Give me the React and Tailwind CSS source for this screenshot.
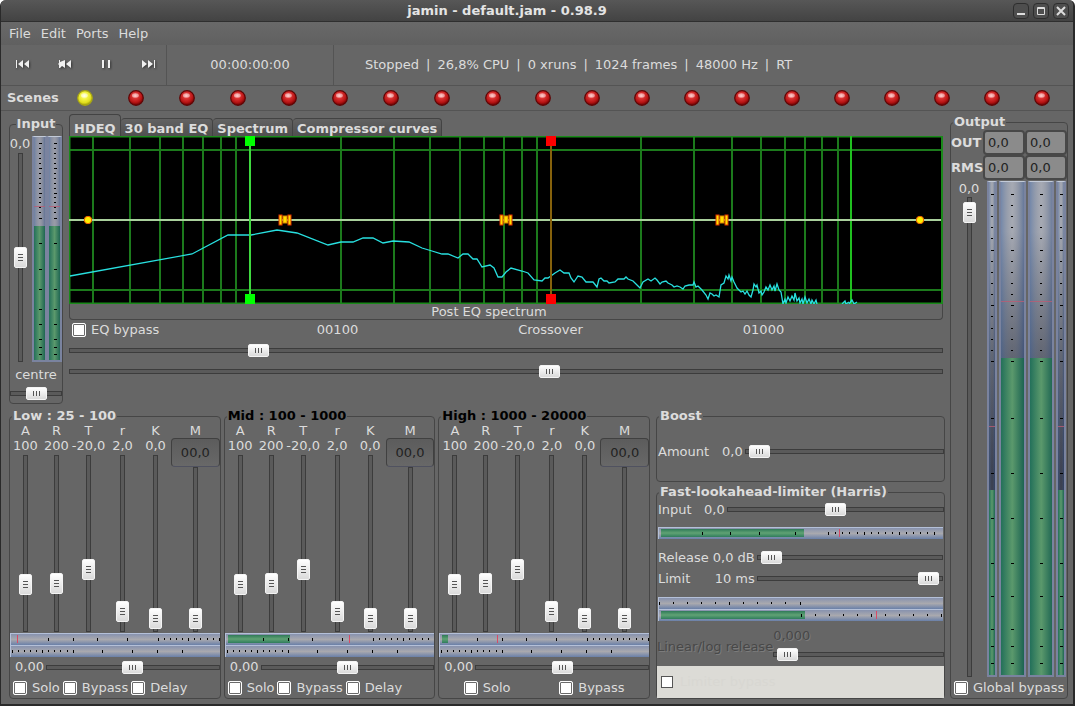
import React from "react";
import clsx from "clsx";

const menus = ["File", "Edit", "Ports", "Help"];

const status = [
  "Stopped",
  "26,8% CPU",
  "0 xruns",
  "1024 frames",
  "48000 Hz",
  "RT",
];

const tabs = ["HDEQ", "30 band EQ", "Spectrum", "Compressor curves"];

const bands = [
  {
    name: "Low : 25 - 100",
    active: true,
    peak: 6,
    level: [0, 0],
    toggles: ["Solo", "Bypass", "Delay"],
  },
  {
    name: "Mid : 100 - 1000",
    active: false,
    peak: 124,
    level: [2, 64],
    toggles: ["Solo", "Bypass", "Delay"],
  },
  {
    name: "High : 1000 - 20000",
    active: false,
    peak: 57,
    level: [2, 8],
    toggles: ["Solo", "Bypass"],
  },
];

const bandSliders = [
  { key: "A", name: "Attack", text: "100", value: 237 },
  { key: "R", name: "Release", text: "200", value: 244 },
  { key: "T", name: "Threshold", text: "-20,0", value: 333 },
  { key: "r", name: "Ratio", text: "2,0", value: 64 },
  { key: "K", name: "Knee", text: "0,0", value: 19 },
];

// evenly spaced ticks, every fifth one is a major tick
const scale = (start, step, count) =>
  Array.from({ length: count }, (_, i) => [start + i * step, i % 5 === 0]);

const major = (...positions) => positions.map((p) => [p, true]);

const inputTicks = [
  ...scale(6, 5, 15),
  ...major(82, 107, 133, 153, 174, 189, 204, 212, 219),
];
const outputTicks = [
  ...scale(12, 11.2, 16),
  ...major(237, 293, 338, 383, 417, 450, 467, 484),
];
const bandInTicks = [...major(37, 62, 87, 117), ...scale(148, 6.1, 11)];
const bandGainTicks = [...scale(1, 6.1, 11), ...major(92, 122, 147, 172)];
const limitInTicks = [...major(43, 71, 100, 136), ...scale(170, 7.05, 16)];
const limitGainTicks = scale(0, 14.1, 11);
const limitOutTicks = scale(142, 14.1, 11);

// x positions of the frequency grid
const gridX = [
  24, 61, 91, 114, 134, 152, 167, 272, 325, 361, 391, 415, 435, 453, 468, 572,
  625, 663, 692, 716, 736, 753, 769,
];

const spectrum =
  "1,140 123,118 159,99 182,99 208,94 228,97 259,109 272,106 284,106 294,102 304,102 314,107 324,105 340,106 353,112 363,115 373,118 379,118 389,122 394,118 399,118 404,123 408,123 413,131 421,129 425,132 429,141 433,141 437,136 442,132 453,135 459,137 465,144 473,145 476,142 479,142 486,137 491,134 495,137 500,137 502,142 505,146 509,140 513,141 517,146 524,146 528,151 530,143 532,142 535,145 538,145 540,147 546,146 549,143 555,143 557,141 559,143 564,145 568,149 571,152 574,146 579,143 582,145 586,142 588,144 591,148 593,146 597,145 599,147 603,149 605,151 608,150 611,151 614,153 616,150 620,149 624,149 625,146 627,151 629,150 633,154 637,159 639,163 641,157 643,158 645,160 647,159 650,161 652,149 655,147 657,140 659,143 660,139 662,145 663,141 665,146 667,150 668,152 672,156 674,155 676,158 678,155 680,159 682,161 684,154 685,148 687,151 688,149 690,157 692,155 693,159 695,156 697,151 699,154 701,149 703,154 705,150 706,155 708,148 710,154 712,156 714,168 716,163 717,167 719,161 721,165 723,160 725,164 726,157 728,165 730,162 731,167 733,163 734,168 736,161 738,167 740,163 742,168 743,164 745,168 747,164 748,168";

const thumb =
  "[&::-webkit-slider-thumb]:appearance-none [&::-webkit-slider-thumb]:rounded-xs [&::-webkit-slider-thumb]:border [&::-webkit-slider-thumb]:border-[#f4f4f4]";

const Slider = ({ label, value, vertical, disabled, className }) => (
  <input
    type="range"
    min="0"
    max="1000"
    defaultValue={value}
    aria-label={label}
    disabled={disabled}
    className={clsx(
      "block m-0 appearance-none",
      thumb,
      vertical
        ? "w-[13px] [writing-mode:vertical-lr] [direction:rtl] [background:linear-gradient(#5a5a5a,#5a5a5a)_center/3px_calc(100%_-_2px)_no-repeat,linear-gradient(#3c3c3c,#3c3c3c)_center/5px_100%_no-repeat] [&::-webkit-slider-thumb]:w-[13px] [&::-webkit-slider-thumb]:h-[21px] [&::-webkit-slider-thumb]:[background:repeating-linear-gradient(180deg,#555_0_1px,transparent_1px_3px)_center/5px_7px_no-repeat,linear-gradient(#ffffff,#dadada)]"
        : "h-[13px] min-w-0 [background:linear-gradient(#5a5a5a,#5a5a5a)_center/calc(100%_-_2px)_3px_no-repeat,linear-gradient(#3c3c3c,#3c3c3c)_center/100%_5px_no-repeat] [&::-webkit-slider-thumb]:w-[21px] [&::-webkit-slider-thumb]:h-[13px] [&::-webkit-slider-thumb]:[background:repeating-linear-gradient(90deg,#555_0_1px,transparent_1px_3px)_center/7px_5px_no-repeat,linear-gradient(#ffffff,#dadada)]",
      className
    )}
  />
);

const Check = ({ label, className }) => (
  <label className={clsx("flex items-center gap-[5px]", className)}>
    <input
      type="checkbox"
      className="size-3.5 shrink-0 appearance-none rounded-xs border border-white bg-white shadow-[inset_0_0_0_1px_#6a6a6a] checked:bg-[#555]"
    />
    <span>{label}</span>
  </label>
);

const pct = (v, length) => `${(v / length) * 100}%`;

const HMeter = ({ length, ticks, level = [0, 0], peak }) => (
  <div className="h-3 border-t border-l border-[#b4c0d8] bg-linear-to-b from-[#8792ae] via-[#a9a9ae] to-[#6a80a8]">
    <svg className="block h-[11px] w-full" shapeRendering="crispEdges">
      <defs>
        <linearGradient id="green-h" x1="0" y1="0" x2="0" y2="1">
          <stop offset="0" stopColor="#2f7a58" />
          <stop offset="0.5" stopColor="#60a274" />
          <stop offset="1" stopColor="#2f7d5c" />
        </linearGradient>
      </defs>
      {level[1] > 0 && (
        <rect
          x={pct(level[0], length)}
          y="1"
          width={pct(level[1] - level[0], length)}
          height="8"
          fill="url(#green-h)"
        />
      )}
      {peak && (
        <rect x={pct(peak, length)} y="1" width="1" height="8" fill="#d84a66" />
      )}
      {ticks.map(([p, big]) => (
        <rect
          key={p}
          x={pct(p, length)}
          y="4"
          width="1"
          height={big ? 3 : 2}
          fill="#000"
        />
      ))}
    </svg>
  </div>
);

const VMeter = ({ length, ticks, level, peak, dark }) => (
  <div
    className={clsx(
      "flex border-x-2 border-t border-b-2 border-x-[#7a839f] border-t-[#c2cad8] border-b-[#7a839f]",
      dark
        ? "bg-linear-to-b from-[#a9adb8] from-10% via-[#5d6270] via-35% to-[#2f3548] to-60%"
        : "bg-[#9a9dab]"
    )}
  >
    <svg className="block h-full w-full" shapeRendering="crispEdges">
      <defs>
        <linearGradient id="green-v">
          <stop offset="0" stopColor="#23705a" />
          <stop offset="0.5" stopColor="#5b996c" />
          <stop offset="1" stopColor="#1f6653" />
        </linearGradient>
        <linearGradient id="shade-v">
          <stop offset="0" stopColor="#3f639c" stopOpacity="0.5" />
          <stop offset="0.5" stopColor="#888" stopOpacity="0.1" />
          <stop offset="1" stopColor="#2c4a80" stopOpacity="0.5" />
        </linearGradient>
      </defs>
      <rect width="100%" height="100%" fill="url(#shade-v)" />
      <rect
        y={pct(level, length)}
        width="100%"
        height={pct(length - level, length)}
        fill="url(#green-v)"
      />
      <rect
        y={pct(peak, length)}
        width="100%"
        height="1"
        fill="#b85c74"
        fillOpacity="0.8"
      />
      {ticks.map(([p, big]) => (
        <rect
          key={p}
          x="50%"
          y={pct(p, length)}
          width={big ? 3 : 2}
          height="1"
          transform="translate(-1 0)"
          fill="#000"
        />
      ))}
    </svg>
  </div>
);

const Frame = ({ title, className, legendClass, children }) => (
  <fieldset
    className={clsx("min-w-0 rounded-sm border border-[#464646]", className)}
  >
    <legend
      className={clsx("h-4 px-px text-[13px] leading-4 font-bold", legendClass)}
    >
      {title}
    </legend>
    {children}
  </fieldset>
);

const WindowButton = ({ label, children }) => (
  <button
    aria-label={label}
    className="flex size-4 items-center justify-center rounded-sm border border-[#2e2e2e] bg-[#4e4e4e]"
  >
    <svg width="12" height="12" viewBox="0 0 12 12">
      {children}
    </svg>
  </button>
);

const TitleBar = () => (
  <header className="flex h-[22px] items-center gap-1 border-b border-[#2f2f2f] bg-linear-to-b from-[#575757] to-[#434343] pt-px pr-1 pl-1">
    <h1 className="flex-1 text-center text-[13px] font-bold text-[#e4e4e4]">
      jamin - default.jam - 0.98.9
    </h1>
    <WindowButton label="Minimize">
      <path d="M2 9h8" stroke="#ddd" strokeWidth="2" />
    </WindowButton>
    <WindowButton label="Maximize">
      <path
        d="M2.5 2.5h7v7h-7zM2 3.5h8"
        fill="none"
        stroke="#ddd"
        strokeWidth="1"
      />
    </WindowButton>
    <WindowButton label="Close">
      <path d="M2 2l8 8M10 2l-8 8" stroke="#ddd" strokeWidth="2" />
    </WindowButton>
  </header>
);

const transport = [
  { label: "Rewind to start", d: "M1 1h1v8h-1zM8 1v8l-5-4zM14 1v8l-5-4z" },
  { label: "Rewind", d: "M2 1h1v2l5-2v8l-3-2-2 2h-1v-3l-1-1 1-1zM14 1v8l-5-4z" },
  { label: "Pause", d: "M3 1h2v8h-2zM9 1h2v8h-2z" },
  { label: "Forward to end", d: "M1 1v8l5-4zM7 1v8l5-4zM13 1h1v8h-1z" },
];

const Toolbar = () => (
  <div className="flex h-[41px] border-b border-[#545454]">
    <div className="flex w-[166px] border-r border-[#545454]">
      {transport.map((t) => (
        <button
          key={t.label}
          aria-label={t.label}
          className="flex h-[37px] w-[42px] shrink-0 items-center justify-center"
        >
          <svg
            width="15"
            height="10"
            viewBox="0 0 15 10"
            className="drop-shadow-[1px_1px_1px_#333]"
          >
            <path d={t.d} fill="#f0f0f0" />
          </svg>
        </button>
      ))}
    </div>
    <div className="flex w-[167px] items-center justify-center border-r border-[#545454]">
      00:00:00:00
    </div>
    <p className="flex items-center gap-[7px] pl-[31px] whitespace-nowrap">
      {status.map((s, i) => (
        <React.Fragment key={s}>
          {i > 0 && <span>|</span>}
          <span>{s}</span>
        </React.Fragment>
      ))}
    </p>
  </div>
);

const Led = ({ on }) => (
  <svg width="16" height="16" viewBox="0 0 16 16">
    <defs>
      <radialGradient id="led-red" cx="0.45" cy="0.35" r="0.6">
        <stop offset="0" stopColor="#ff9a9a" />
        <stop offset="0.3" stopColor="#dd3535" />
        <stop offset="0.75" stopColor="#b81414" />
        <stop offset="1" stopColor="#7a0505" />
      </radialGradient>
      <radialGradient id="led-yellow" cx="0.45" cy="0.35" r="0.6">
        <stop offset="0" stopColor="#ffffd8" />
        <stop offset="0.35" stopColor="#f6f64a" />
        <stop offset="0.8" stopColor="#e0de1c" />
        <stop offset="1" stopColor="#aaa810" />
      </radialGradient>
    </defs>
    <circle
      cx="8"
      cy="8"
      r="7.3"
      fill={on ? "url(#led-yellow)" : "url(#led-red)"}
      stroke={on ? "#a8a614" : "#5e0606"}
      strokeWidth="1.2"
    />
    <ellipse cx="7.4" cy="5.4" rx="3.4" ry="2.2" fill="#fff" fillOpacity="0.5" />
  </svg>
);

const Scenes = () => (
  <div className="flex h-[25px] items-center border-b border-[#545454] pr-1.5 pl-1.5">
    <span className="w-[53px] font-bold">Scenes</span>
    <div className="grid flex-1 grid-cols-[repeat(8,51fr)_repeat(12,50fr)]">
      {Array.from({ length: 20 }, (_, i) => (
        <button
          key={i}
          aria-label={`Scene ${i + 1}`}
          className="flex justify-center"
        >
          <Led on={i === 0} />
        </button>
      ))}
    </div>
  </div>
);

const InputPanel = () => (
  <Frame
    title="Input"
    className="mt-[5px] w-[54px] pb-[3px]"
    legendClass="mx-auto"
  >
    <div className="flex gap-0.5 pt-1">
      <div className="flex w-5 flex-col items-center">
        <span className="h-[17px] leading-4">0,0</span>
        <Slider label="Input gain" value={500} vertical className="h-[209px]" />
      </div>
      <div className="grid flex-1 grid-cols-2">
        <VMeter length={225} ticks={inputTicks} level={90} peak={70} />
        <VMeter length={225} ticks={inputTicks} level={90} peak={70} />
      </div>
    </div>
    <div className="flex h-[25px] items-center justify-center">centre</div>
    <Slider label="Input balance" value={500} className="w-full" />
  </Frame>
);

const EqHandle = ({ x }) => (
  <g>
    <rect x={x - 6} y="79" width="3" height="10" fill="#ffe000" stroke="#e03000" />
    <rect x={x + 3} y="79" width="3" height="10" fill="#ffe000" stroke="#e03000" />
    <rect x={x - 2} y="80" width="4" height="7" fill="#ffe000" stroke="#e08000" />
  </g>
);

const EqGraph = () => (
  <svg
    viewBox="0 0 874 168"
    preserveAspectRatio="none"
    className="block h-[168px] w-full bg-black"
  >
    <g fill="none" stroke="#1c7a1c" strokeWidth="2">
      {gridX.map((x) => (
        <path key={x} d={`M${x} 0V168`} />
      ))}
      <path d="M0 14H874M0 154H874" />
      <path d="M0 0.5H874M0 167.5H874M0.5 0V168M873 0V168" stroke="#1a8a1a" />
    </g>
    <path d="M782 0V168" stroke="#20c020" strokeWidth="2" />
    <path d="M0 84H872" stroke="#a9d09c" strokeWidth="2" />
    <polyline
      points={spectrum}
      fill="none"
      stroke="#28e0e0"
      strokeWidth="1.3"
    />
    <path
      d="M773 168l3-3 1 3 3-2M780 168l3-4 2 4 3-2"
      fill="none"
      stroke="#28e0e0"
      strokeWidth="1.3"
    />
    <path d="M181 0V168" stroke="#3fd83f" strokeWidth="2" />
    <path d="M176 0h10v10h-10zM176 158h10v10h-10z" fill="#00ff00" />
    <path d="M482 0V168" stroke="#86620c" strokeWidth="2" />
    <path d="M477 0h10v10h-10zM477 158h10v10h-10z" fill="#ff0000" />
    <circle cx="19" cy="84" r="3.7" fill="#ffee00" stroke="#f06000" />
    <circle cx="851" cy="84" r="3.7" fill="#ffee00" stroke="#f06000" />
    <EqHandle x={216} />
    <EqHandle x={437} />
    <EqHandle x={653} />
  </svg>
);

const EqPanel = () => (
  <div className="min-w-0 flex-1 pt-[3px] pr-0.5">
    <div role="tablist" className="flex items-end">
      {tabs.map((tab, i) => (
        <button
          key={tab}
          role="tab"
          aria-selected={i === 0}
          className={clsx(
            "rounded-t-sm border border-b-0 border-[#434343] px-1 font-bold whitespace-nowrap",
            i === 0
              ? "h-[22px] pt-1.5"
              : "h-[18px] border-l-0 bg-linear-to-b from-[#626262] to-[#505050] pt-0.5"
          )}
        >
          <span className="block leading-4">{tab}</span>
        </button>
      ))}
    </div>
    <EqGraph />
    <div className="flex h-4 items-center justify-center rounded-b-sm border border-t-0 border-[#464646] pr-[34px]">
      Post EQ spectrum
    </div>
    <div className="grid h-5 grid-cols-[162px_1fr_1fr_1fr] items-center pr-[73px] text-center">
      <Check label="EQ bypass" className="pl-[3px]" />
      <span>00100</span>
      <span>Crossover</span>
      <span>01000</span>
    </div>
    <div className="flex flex-col gap-2 pt-1">
      <Slider label="Low crossover" value={210} className="w-full" />
      <Slider label="High crossover" value={551} className="w-full" />
    </div>
  </div>
);

const Band = ({ band }) => (
  <Frame
    title={band.name}
    className="flex-1"
    legendClass={clsx("ml-0.5", !band.active && "text-black")}
  >
    <div className="grid grid-cols-[31px_31px_33px_35px_31px_1fr] pb-px leading-[13px]">
      {bandSliders.map((s) => (
        <div key={s.key} className="flex flex-col items-center">
          <span className="h-[15px]">{s.key}</span>
          <span className="h-4 whitespace-nowrap">{s.text}</span>
          <Slider
            label={`${band.name} ${s.name}`}
            value={s.value}
            vertical
            className="h-[177px]"
          />
        </div>
      ))}
      <div className="flex flex-col items-center">
        <span className="h-[14px]">M</span>
        <button className="h-[29px] w-full rounded-sm border border-[#404040] border-b-[#505260] bg-linear-to-b from-[#5c5c5c] to-[#686868] text-[#222]">
          00,0
        </button>
        <Slider
          label={`${band.name} Makeup gain`}
          value={21}
          vertical
          className="h-[165px]"
        />
      </div>
    </div>
    <HMeter
      length={210}
      ticks={bandInTicks}
      level={band.level}
      peak={band.peak}
    />
    <HMeter length={210} ticks={bandGainTicks} />
    <div className="flex h-5 items-center gap-0.5 pl-[5px]">
      <span>0,00</span>
      <Slider label={`${band.name} gain`} value={500} className="flex-1" />
    </div>
    <div
      className={clsx(
        "flex h-[21px] items-center",
        band.toggles.length === 3 ? "gap-[3px] pl-[3px]" : "justify-around"
      )}
    >
      {band.toggles.map((t) => (
        <Check key={t} label={t} />
      ))}
    </div>
  </Frame>
);

const Boost = () => (
  <Frame title="Boost" className="pt-[18px] pb-5" legendClass="ml-0.5">
    <div className="flex h-[19px] items-center gap-0.5 pl-px">
      <span className="w-[62px]">Amount</span>
      <span>0,0</span>
      <Slider label="Boost amount" value={22} className="flex-1" />
    </div>
  </Frame>
);

const Limiter = () => (
  <Frame
    title="Fast-lookahead-limiter (Harris)"
    className="flex flex-1 flex-col"
    legendClass="ml-0.5"
  >
    <div className="flex h-[19px] items-center gap-0.5 pl-px">
      <span className="w-11">Input</span>
      <span>0,0</span>
      <Slider label="Limiter input" value={500} className="flex-1" />
    </div>
    <div className="py-2 pr-px pl-px">
      <HMeter length={285} ticks={limitInTicks} level={[2, 146]} peak={181} />
    </div>
    <div className="grid grid-cols-[auto_1fr] items-center gap-x-0.5 pr-px pl-px leading-[21px]">
      <div className="flex justify-between gap-1">
        <span>Release</span>
        <span>0,0 dB</span>
      </div>
      <Slider label="Release" value={24} className="w-full" />
      <div className="flex justify-between">
        <span>Limit</span>
        <span>10 ms</span>
      </div>
      <Slider label="Limit" value={976} className="w-full" />
    </div>
    <div className="pt-2 pr-px pl-px">
      <HMeter length={285} ticks={limitGainTicks} />
      <HMeter
        length={285}
        ticks={limitOutTicks}
        level={[2, 147]}
        peak={218}
      />
    </div>
    <div className="flex h-[45px] items-center text-[#484848] text-shadow-[1px_1px_0_#7c7c7c]">
      <span className="pt-1.5">Linear/log release</span>
      <div className="flex min-w-0 flex-1 flex-col gap-[3px] pt-px">
        <span className="leading-[18px]">0,000</span>
        <Slider
          label="Linear/log release"
          value={26}
          disabled
          className="w-full"
        />
      </div>
    </div>
    <div className="flex flex-1 items-center bg-[#dcdbd6] pl-1 text-[#d8d7d2]">
      <label className="flex items-center gap-[7px]">
        <input
          type="checkbox"
          className="size-3 appearance-none border border-[#555] bg-white checked:bg-[#555]"
        />
        <span>Limiter bypass</span>
      </label>
    </div>
  </Frame>
);

const Readout = ({ label }) => (
  <>
    <span className="font-bold">{label}</span>
    {["left", "right"].map((side) => (
      <button
        key={side}
        aria-label={`${label} ${side}`}
        className="h-[25px] rounded-sm border-2 border-[#484848] bg-[#8b8b8b] px-[3px] text-left text-[#222]"
      >
        0,0
      </button>
    ))}
  </>
);

const OutputPanel = () => (
  <Frame
    title="Output"
    className="mt-[3px] flex w-[118px] flex-col"
    legendClass="ml-0.5"
  >
    <div className="grid grid-cols-[32px_1fr_1fr] items-center">
      <Readout label="OUT" />
      <Readout label="RMS" />
    </div>
    <div className="flex flex-1 pt-px pr-px">
      <div className="flex w-9 flex-col items-center">
        <span className="h-4 leading-4">0,0</span>
        <Slider label="Output gain" value={989} vertical className="flex-1" />
      </div>
      <div className="grid flex-1 grid-cols-[10px_1fr_1fr_10px] gap-x-0.5">
        <VMeter length={496} ticks={outputTicks} level={310} peak={245} dark />
        <VMeter length={496} ticks={outputTicks} level={177} peak={120} dark />
        <VMeter length={496} ticks={outputTicks} level={177} peak={120} dark />
        <VMeter length={496} ticks={outputTicks} level={310} peak={245} dark />
      </div>
    </div>
    <Check
      label="Global bypass"
      className="h-[21px] pl-[3px] whitespace-nowrap"
    />
  </Frame>
);

const App = () => (
  <div className="min-h-screen overflow-hidden rounded-t-md border-r-2 border-b-2 border-l border-[#2a2a2a] bg-[#666666] font-['DejaVu_Sans','Liberation_Sans',sans-serif] text-[13px] leading-4 text-[#dcdcdc]">
    <TitleBar />
    <nav className="flex h-[23px] items-center gap-2.5 bg-linear-to-b from-[#696969] to-[#606060] pl-2">
      {menus.map((m) => (
        <button key={m}>{m}</button>
      ))}
    </nav>
    <Toolbar />
    <Scenes />
    <main className="flex gap-[5px] pr-[5px] pb-[5px] pl-2">
      <div className="flex min-w-0 flex-1 flex-col gap-1">
        <div className="flex gap-1.5">
          <InputPanel />
          <EqPanel />
        </div>
        <div className="flex gap-1.5">
          <div className="flex min-w-0 flex-1 gap-[3px]">
            {bands.map((band) => (
              <Band key={band.name} band={band} />
            ))}
          </div>
          <div className="flex w-[289px] flex-col gap-0.5">
            <Boost />
            <Limiter />
          </div>
        </div>
      </div>
      <OutputPanel />
    </main>
  </div>
);

export default App;
